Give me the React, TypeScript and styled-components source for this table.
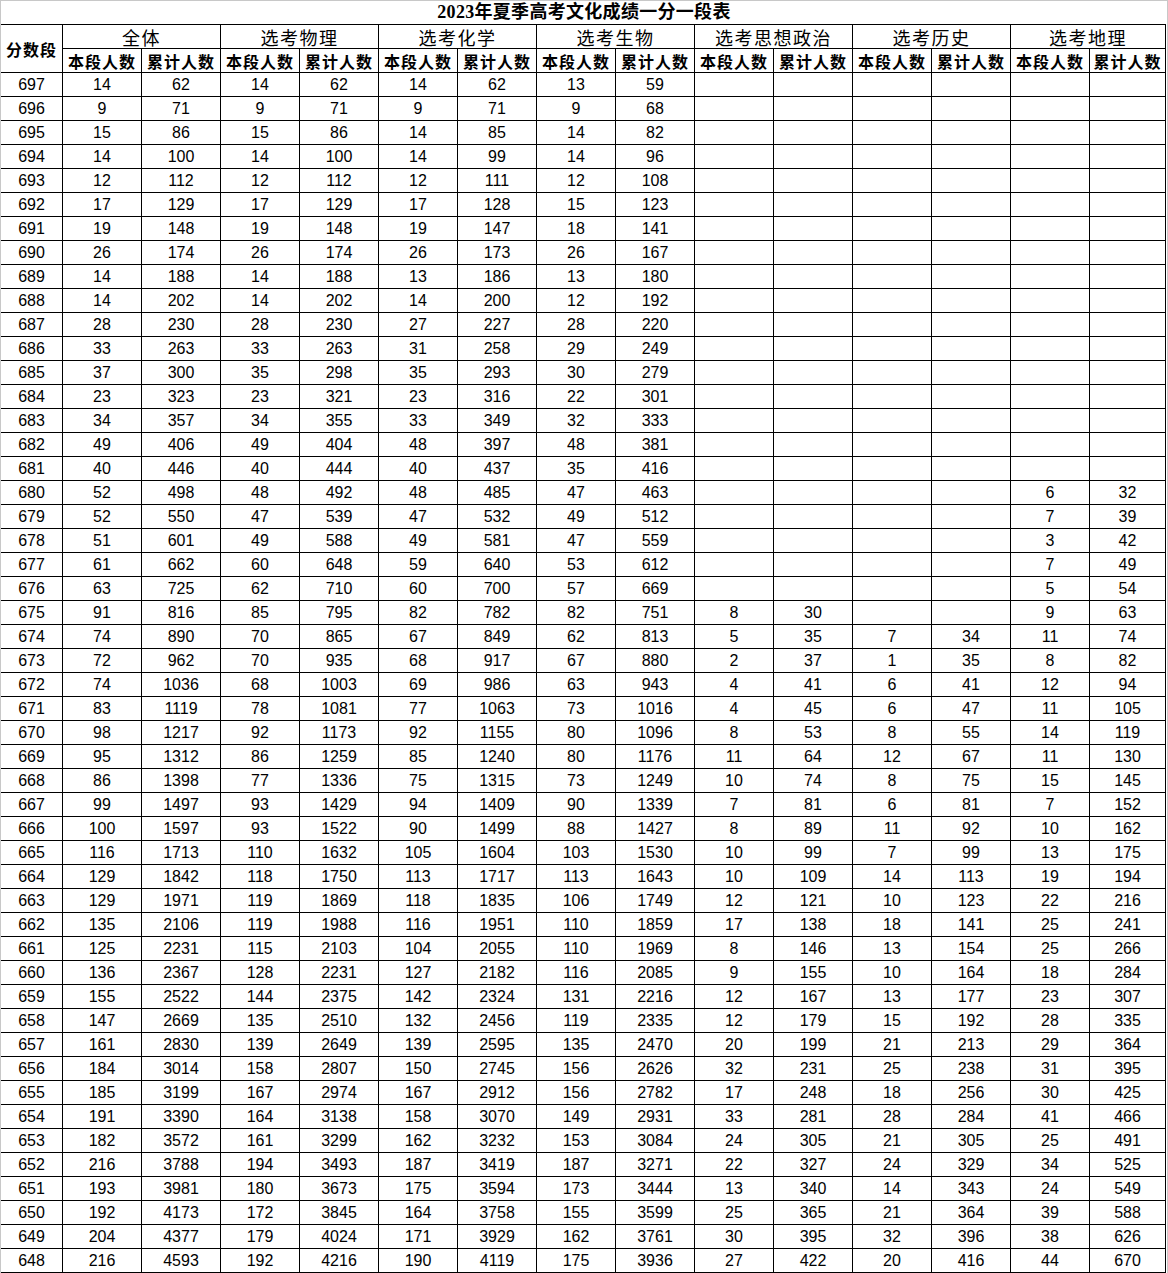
import React from 'react';
import styled, { createGlobalStyle } from 'styled-components';

const GlobalStyle = createGlobalStyle`
  html, body {
    margin: 0;
    padding: 0;
    background: #ffffff;
  }
`;

const Frame = styled.div`
  width: 1168px;
  box-sizing: border-box;
  border: 1px solid #c8c8c8;
  border-bottom: none;
  background: #ffffff;
`;

const Title = styled.div`
  height: 23px;
  line-height: 23px;
  text-align: center;
  font-family: 'Liberation Serif', 'Noto Sans CJK SC', serif;
  font-size: 18px;
  font-weight: bold;
  letter-spacing: 0.3px;
  color: #000;
`;

const Grid = styled.div`
  display: grid;
  width: 1165px;
  box-sizing: border-box;
  grid-template-columns: 61px repeat(13, 78px) 75px;
  grid-auto-rows: 23px;
  gap: 1px;
  padding: 1px 1px 1px 0;
  background: #000;
`;

const Cell = styled.div`
  background: #fff;
  display: flex;
  align-items: center;
  justify-content: center;
  font-family: 'Liberation Sans', Arial, sans-serif;
  font-size: 16px;
  color: #000;
  white-space: nowrap;
`;

const GroupHead = styled(Cell)`
  grid-column: span 2;
  font-family: 'Liberation Serif', 'Noto Sans CJK SC', serif;
  font-size: 18px;
  font-weight: 400;
  letter-spacing: 1.5px;
`;

const SubHead = styled(Cell)<{ $tall?: boolean }>`
  grid-row: ${p => (p.$tall ? 'span 2' : 'auto')};
  font-family: 'Noto Sans CJK SC', sans-serif;
  font-size: 16px;
  font-weight: bold;
  letter-spacing: 1px;
`;

const groups = ['全体', '选考物理', '选考化学', '选考生物', '选考思想政治', '选考历史', '选考地理'];

const raw = `697 14 62 14 62 14 62 13 59 - - - - - -
696 9 71 9 71 9 71 9 68 - - - - - -
695 15 86 15 86 14 85 14 82 - - - - - -
694 14 100 14 100 14 99 14 96 - - - - - -
693 12 112 12 112 12 111 12 108 - - - - - -
692 17 129 17 129 17 128 15 123 - - - - - -
691 19 148 19 148 19 147 18 141 - - - - - -
690 26 174 26 174 26 173 26 167 - - - - - -
689 14 188 14 188 13 186 13 180 - - - - - -
688 14 202 14 202 14 200 12 192 - - - - - -
687 28 230 28 230 27 227 28 220 - - - - - -
686 33 263 33 263 31 258 29 249 - - - - - -
685 37 300 35 298 35 293 30 279 - - - - - -
684 23 323 23 321 23 316 22 301 - - - - - -
683 34 357 34 355 33 349 32 333 - - - - - -
682 49 406 49 404 48 397 48 381 - - - - - -
681 40 446 40 444 40 437 35 416 - - - - - -
680 52 498 48 492 48 485 47 463 - - - - 6 32
679 52 550 47 539 47 532 49 512 - - - - 7 39
678 51 601 49 588 49 581 47 559 - - - - 3 42
677 61 662 60 648 59 640 53 612 - - - - 7 49
676 63 725 62 710 60 700 57 669 - - - - 5 54
675 91 816 85 795 82 782 82 751 8 30 - - 9 63
674 74 890 70 865 67 849 62 813 5 35 7 34 11 74
673 72 962 70 935 68 917 67 880 2 37 1 35 8 82
672 74 1036 68 1003 69 986 63 943 4 41 6 41 12 94
671 83 1119 78 1081 77 1063 73 1016 4 45 6 47 11 105
670 98 1217 92 1173 92 1155 80 1096 8 53 8 55 14 119
669 95 1312 86 1259 85 1240 80 1176 11 64 12 67 11 130
668 86 1398 77 1336 75 1315 73 1249 10 74 8 75 15 145
667 99 1497 93 1429 94 1409 90 1339 7 81 6 81 7 152
666 100 1597 93 1522 90 1499 88 1427 8 89 11 92 10 162
665 116 1713 110 1632 105 1604 103 1530 10 99 7 99 13 175
664 129 1842 118 1750 113 1717 113 1643 10 109 14 113 19 194
663 129 1971 119 1869 118 1835 106 1749 12 121 10 123 22 216
662 135 2106 119 1988 116 1951 110 1859 17 138 18 141 25 241
661 125 2231 115 2103 104 2055 110 1969 8 146 13 154 25 266
660 136 2367 128 2231 127 2182 116 2085 9 155 10 164 18 284
659 155 2522 144 2375 142 2324 131 2216 12 167 13 177 23 307
658 147 2669 135 2510 132 2456 119 2335 12 179 15 192 28 335
657 161 2830 139 2649 139 2595 135 2470 20 199 21 213 29 364
656 184 3014 158 2807 150 2745 156 2626 32 231 25 238 31 395
655 185 3199 167 2974 167 2912 156 2782 17 248 18 256 30 425
654 191 3390 164 3138 158 3070 149 2931 33 281 28 284 41 466
653 182 3572 161 3299 162 3232 153 3084 24 305 21 305 25 491
652 216 3788 194 3493 187 3419 187 3271 22 327 24 329 34 525
651 193 3981 180 3673 175 3594 173 3444 13 340 14 343 24 549
650 192 4173 172 3845 164 3758 155 3599 25 365 21 364 39 588
649 204 4377 179 4024 171 3929 162 3761 30 395 32 396 38 626
648 216 4593 192 4216 190 4119 175 3936 27 422 20 416 44 670`;

const rows = raw.split('\n').map(line => line.trim().split(/\s+/).map(v => (v === '-' ? '' : v)));

export default function App() {
  return (
    <>
      <GlobalStyle />
      <Frame>
        <Title>2023年夏季高考文化成绩一分一段表</Title>
        <Grid>
          <SubHead $tall>分数段</SubHead>
          {groups.map(g => (
            <GroupHead key={g}>{g}</GroupHead>
          ))}
          {groups.map(g => (
            <React.Fragment key={g}>
              <SubHead>本段人数</SubHead>
              <SubHead>累计人数</SubHead>
            </React.Fragment>
          ))}
          {rows.map(r => r.map((v, i) => <Cell key={r[0] + '-' + i}>{v}</Cell>))}
        </Grid>
      </Frame>
    </>
  );
}
